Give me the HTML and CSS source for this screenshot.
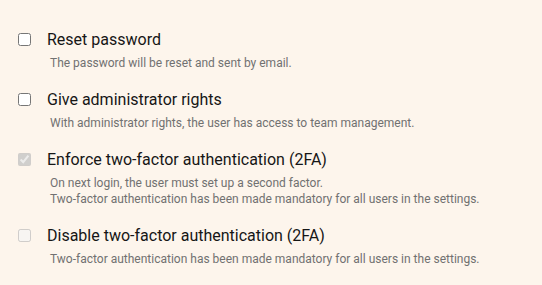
FILE: index.html
```html
<!DOCTYPE html>
<html>
<head>
<meta charset="utf-8">
<link rel="stylesheet" href="styles.css">
</head>
<body>
<div class="list">
  <div class="option">
    <label class="head"><input type="checkbox" class="box"><span class="title">Reset password</span></label>
    <div class="desc">The password will be reset and sent by email.</div>
  </div>
  <div class="option">
    <label class="head"><input type="checkbox" class="box"><span class="title">Give administrator rights</span></label>
    <div class="desc">With administrator rights, the user has access to team management.</div>
  </div>
  <div class="option">
    <label class="head"><input type="checkbox" class="box" checked disabled><span class="title">Enforce two-factor authentication (2FA)</span></label>
    <div class="desc">On next login, the user must set up a second factor.<br>Two-factor authentication has been made mandatory for all users in the settings.</div>
  </div>
  <div class="option">
    <label class="head"><input type="checkbox" class="box" disabled><span class="title">Disable two-factor authentication (2FA)</span></label>
    <div class="desc">Two-factor authentication has been made mandatory for all users in the settings.</div>
  </div>
</div>
</body>
</html>
```

FILE: styles.css
```css
html, body {
  margin: 0;
  padding: 0;
  background: #fdf5ec;
}
body {
  font-family: Roboto, "Liberation Sans", sans-serif;
}
.list {
  display: flex;
  flex-direction: column;
  gap: 18px;
  padding: 29px 14px 0 14px;
}
.option {
  display: flex;
  flex-direction: column;
}
.head {
  display: flex;
  align-items: center;
  gap: 16px;
  height: 20px;
}
.box {
  margin: 0 0 0 4px;
  width: 13px;
  height: 13px;
}
.title {
  font-size: 16px;
  color: #161616;
}
.desc {
  margin: 6px 0 0 36px;
  font-size: 12px;
  line-height: 16px;
  color: #717171;
}
```
